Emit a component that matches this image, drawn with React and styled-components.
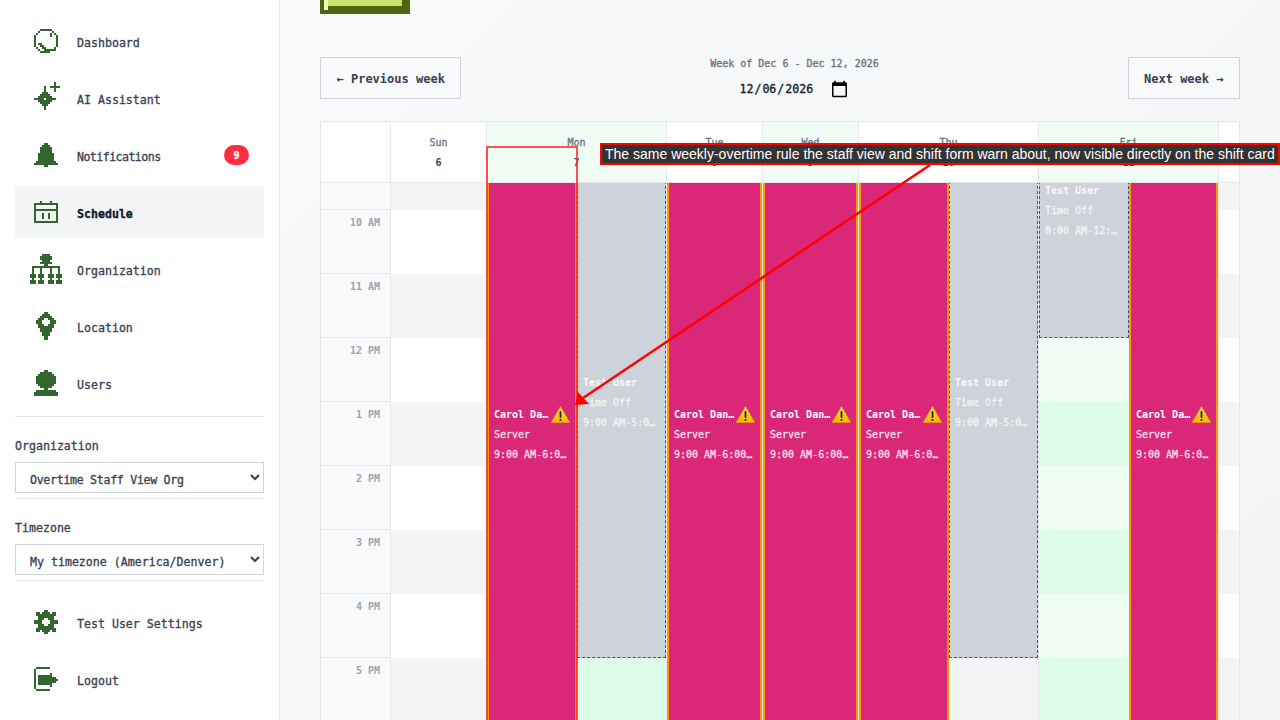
import React from "react";
import styled, { createGlobalStyle } from "styled-components";

const MONO = `"DejaVu Sans Mono", "Liberation Mono", monospace`;

const Global = createGlobalStyle`
  html, body { margin: 0; padding: 0; height: 100%; overflow: hidden; }
  body { font-family: ${MONO}; background: #f9fafb; -webkit-text-stroke: 0.3px currentColor; }
  * { box-sizing: border-box; }
`;

const Page = styled.div`
  position: relative;
  display: flex;
  width: 1280px;
  height: 720px;
  overflow: hidden;
`;

const Sidebar = styled.aside`
  flex: 0 0 280px;
  height: 720px;
  padding: 15px 15px 0;
  background: #fff;
  border-right: 1px solid #e5e7eb;
  box-shadow: 1px 0 2px rgba(0, 0, 0, 0.04);
  display: flex;
  flex-direction: column;
`;

const NavList = styled.nav`
  display: flex;
  flex-direction: column;
  gap: 5px;
`;

const NavItem = styled.a`
  display: flex;
  align-items: center;
  height: 52px;
  padding-left: 15px;
  padding-right: 15px;
  gap: 15px;
  background: ${(p) => (p.$active ? "#f3f4f6" : "transparent")};
  color: ${(p) => (p.$active ? "#111827" : "#374151")};
  font-size: 11.6px;
  font-weight: ${(p) => (p.$active ? 700 : 500)};
`;

const IconCell = styled.span`
  flex: 0 0 32px;
  display: flex;
  justify-content: center;
  align-items: center;
`;

const NavLabel = styled.span`
  flex: 1;
  padding-top: 4px;
  letter-spacing: ${(p) => p.$spacing || "0"};
`;

const Badge = styled.span`
  width: 25px;
  height: 20px;
  border-radius: 10px;
  background: #ff2d3d;
  color: #fff;
  font-size: 10px;
  font-weight: 700;
  display: flex;
  align-items: center;
  justify-content: center;
`;

const Divider = styled.hr`
  width: 100%;
  height: 1px;
  margin: ${(p) => p.$gap || "5px"} 0 0;
  border: 0;
  flex: 0 0 1px;
  background: #e5e7eb;
`;

const Section = styled.div`
  padding-top: 20px;
  display: flex;
  flex-direction: column;
`;

const SectionLabel = styled.label`
  height: 16px;
  line-height: 18px;
  margin-bottom: 9px;
  font-size: 11.6px;
  font-weight: 500;
  color: #374151;
`;

const Select = styled.select`
  width: 100%;
  height: 31px;
  padding: 5px 10px 0;
  border: 1px solid #d1d5db;
  border-radius: 0;
  background: #fff;
  color: #374151;
  font-family: ${MONO};
  font-size: 11.6px;
  font-weight: 500;
  letter-spacing: ${(p) => p.$spacing || "0"};
  -webkit-text-stroke: 0.3px #374151;
`;

const BottomNav = styled(NavList)`
  padding-top: 15px;
`;

const Main = styled.main`
  flex: 1;
  min-width: 0;
  height: 720px;
  padding: 0 40px;
  display: flex;
  flex-direction: column;
  background: linear-gradient(135deg, #f9fafb, #f3f4f6);
`;

const Logo = styled.svg`
  display: block;
  flex: 0 0 14px;
`;

const WeekBar = styled.div`
  margin-top: 43px;
  height: 42px;
  display: flex;
  justify-content: space-between;
  align-items: flex-start;
`;

const WeekButton = styled.button`
  height: 42px;
  padding: 1px 15.5px 0;
  border: 1px solid #d1d5db;
  border-radius: 0;
  background: #f9fafb;
  color: #374151;
  font-family: ${MONO};
  font-size: 12px;
  font-weight: 700;
  white-space: nowrap;
  -webkit-text-stroke: 0;
`;

const WeekCenter = styled.div`
  display: flex;
  flex-direction: column;
  align-items: center;
`;

const WeekLabel = styled.div`
  height: 14px;
  line-height: 14px;
  font-size: 10px;
  color: #6b7280;
`;

const DateInput = styled.input`
  width: 116px;
  height: 24px;
  margin-top: 6px;
  padding: 0 3px 0 2px;
  border: 0;
  background: transparent;
  color: #111827;
  font-family: ${MONO};
  font-size: 11.6px;
  outline: none;
  -webkit-text-stroke: 0.3px #111827;
  &::-webkit-datetime-edit { padding: 0; }
  &::-webkit-datetime-edit-fields-wrapper { padding: 0; }
  &::-webkit-calendar-picker-indicator {
    width: 19px;
    height: 19px;
    padding: 0;
    margin: 0;
  }
`;

const Calendar = styled.section`
  margin-top: 22px;
  flex: 1;
  min-height: 0;
  border: 1px solid #e5e7eb;
  border-bottom: 0;
  display: flex;
  flex-direction: column;
  overflow: hidden;
`;

const COLS = "70px 96px 180px 96px 96px 180px 180px 20px";

const HeadRow = styled.div`
  flex: 0 0 61px;
  display: grid;
  grid-template-columns: ${COLS};
  border-bottom: 1px solid #e5e7eb;
`;

const HeadCell = styled.div`
  display: flex;
  flex-direction: column;
  align-items: center;
  justify-content: center;
  border-right: 1px solid #e5e7eb;
  background: ${(p) => (p.$today ? "#f0fdf4" : "#fff")};
  &:last-child { border-right: 0; }
`;

const DayName = styled.span`
  height: 20px;
  line-height: 22px;
  font-size: 10px;
  font-weight: 500;
  color: #6b7280;
`;

const DayNum = styled.span`
  height: 20px;
  line-height: 22px;
  font-size: 10px;
  font-weight: 700;
  color: #374151;
  -webkit-text-stroke: 0;
`;

const Body = styled.div`
  flex: 1;
  min-height: 0;
  overflow: hidden;
`;

const BodyGrid = styled.div`
  margin-top: -37px;
  display: grid;
  grid-template-columns: ${COLS};
`;

const TimeColumn = styled.div`
  display: flex;
  flex-direction: column;
  border-right: 1px solid #e5e7eb;
  background: #f9fafb;
`;

const TimeCell = styled.div`
  height: 64px;
  padding: 7px 10px 0 0;
  border-bottom: 1px solid #e5e7eb;
  text-align: right;
  font-size: 10px;
  line-height: 12px;
  font-weight: 700;
  color: #9ca3af;
  -webkit-text-stroke: 0;
`;

const DayColumn = styled.div`
  position: relative;
  display: flex;
  flex-direction: column;
  border-right: 1px solid #e5e7eb;
  &:last-child { border-right: 0; }
`;

const HourCell = styled.div`
  height: 64px;
  background: ${(p) =>
    p.$today ? (p.$odd ? "#dcfce7" : "#f0fdf4") : p.$odd ? "#f3f4f6" : "#fff"};
`;

const Shift = styled.div`
  position: absolute;
  display: flex;
  flex-direction: column;
  justify-content: center;
  min-width: 0;
  overflow: hidden;
  ${(p) =>
    p.$off
      ? `background: #ced2da; border: 1px dashed #4b5563; padding: 0 5px; color: #f9fafb;`
      : `background: #db2777; border-left: 2px solid #ff9900; border-right: 2px solid #ff9900; padding: 0 5px 0 5px; color: #fff;`}
`;

const ShiftTitle = styled.div`
  display: flex;
  align-items: center;
  gap: 1px;
  height: 20px;
  font-size: 10px;
  font-weight: 700;
  -webkit-text-stroke: 0;
`;

const TruncatedName = styled.span`
  flex: 1;
  min-width: 0;
  overflow: hidden;
  white-space: nowrap;
  text-overflow: ellipsis;
`;

const ShiftLine = styled.div`
  height: 20px;
  line-height: 22px;
  font-size: 10px;
  opacity: 0.85;
  overflow: hidden;
  white-space: nowrap;
  text-overflow: ellipsis;
`;

const Highlight = styled.div`
  position: absolute;
  left: 486px;
  top: 146px;
  width: 92px;
  height: 590px;
  border: 2px solid rgba(255, 40, 40, 0.8);
  pointer-events: none;
`;

const Callout = styled.div`
  position: absolute;
  left: 600px;
  top: 143px;
  width: 680px;
  height: 22px;
  padding-left: 3px;
  background: #333;
  border: 2px solid #ff0000;
  color: #fff;
  font-family: "Liberation Sans", Arial, sans-serif;
  font-size: 14px;
  line-height: 18px;
  white-space: nowrap;
  -webkit-text-stroke: 0;
`;

const ArrowLayer = styled.svg`
  position: absolute;
  left: 0;
  top: 0;
  pointer-events: none;
`;

const icons = {
  dashboard: [
    "...######...",
    "..#......#..",
    ".#......#.#.",
    "#.......#..#",
    "#..........#",
    "#..........#",
    "#..........#",
    "#.##.......#",
    "#..##......#",
    ".#..##....#.",
    "..#..######.",
    "...#####....",
  ],
  sparkle: [
    "...........#..",
    "...........#..",
    "......#..#####",
    "......#....#..",
    "......#....#..",
    ".....###......",
    "....#####.....",
    "...#######....",
    ".#####.#####..",
    "...#######....",
    "....#####.....",
    ".....###......",
    "......#.......",
    "......#.......",
    "..............",
    "..............",
  ],
  bell: [
    ".....##.....",
    "....####....",
    "...######...",
    "...######...",
    "...######...",
    "..########..",
    "..########..",
    "..########..",
    "..########..",
    ".##########.",
    "############",
    ".....##.....",
  ],
  calendar: [
    "...#....#...",
    "############",
    "#..........#",
    "#..........#",
    "############",
    "#..........#",
    "#...#..#...#",
    "#...#..#...#",
    "#...#..#...#",
    "#..........#",
    "############",
  ],
  org: [
    "......####......",
    ".....######.....",
    ".....######.....",
    "......####......",
    ".....######.....",
    ".......##.......",
    ".##############.",
    ".#...#....#...#.",
    ".#...#....#...#.",
    ".#...#....#...#.",
    "###.###..###.###",
    "###.###..###.###",
    ".#...#....#...#.",
    "###.###..###.###",
    "###.###..###.###",
  ],
  pin: [
    "....##....",
    "...####...",
    "..######..",
    ".###..###.",
    "###....###",
    "###....###",
    ".###..###.",
    ".########.",
    "..######..",
    "..######..",
    "...####...",
    "...####...",
    "....##....",
    "....##....",
  ],
  user: [
    ".....##.....",
    "...######...",
    "..########..",
    ".##########.",
    ".##########.",
    ".##########.",
    ".##########.",
    "..########..",
    "...######...",
    ".....##.....",
    ".##########.",
    "############",
    "############",
  ],
  gear: [
    ".....##.....",
    ".##.####.##.",
    ".##########.",
    "..########..",
    "..###..###..",
    "####....####",
    "####....####",
    "..###..###..",
    "..########..",
    ".##########.",
    ".##.####.##.",
    ".....##.....",
  ],
  logout: [
    ".#######....",
    "#...........",
    "#...........",
    "#.......#...",
    "#.#######...",
    "#.#########.",
    "#.##########",
    "#.#########.",
    "#.#######...",
    "#.......#...",
    "#...........",
    ".#######....",
  ],
};

function PixelIcon({ name }) {
  const rows = icons[name];
  const w = rows[0].length;
  const h = rows.length;
  let d = "";
  rows.forEach((row, y) => {
    [...row].forEach((c, x) => {
      if (c === "#") d += `M${x} ${y}h1v1h-1z`;
    });
  });
  return (
    <svg width={w * 2} height={h * 2} viewBox={`0 0 ${w} ${h}`} shapeRendering="crispEdges" aria-hidden="true">
      <path d={d} fill="#33662f" />
    </svg>
  );
}

function WarnIcon() {
  return (
    <svg width="19" height="17" viewBox="0 0 19 17" style={{ flex: "0 0 19px" }} aria-hidden="true">
      <defs>
        <linearGradient id="warnFill" x1="0" y1="0" x2="0" y2="1">
          <stop offset="0" stopColor="#ffe14d" />
          <stop offset="1" stopColor="#f7b500" />
        </linearGradient>
      </defs>
      <path d="M9.5 0.5 L18.8 16.5 H0.2 Z" fill="url(#warnFill)" stroke="#e9a800" strokeWidth="0.6" strokeLinejoin="round" />
      <rect x="8.6" y="5" width="1.8" height="7" rx="0.9" fill="#222" />
      <circle cx="9.5" cy="14" r="1.1" fill="#222" />
    </svg>
  );
}

const NAV = [
  { icon: "dashboard", label: "Dashboard" },
  { icon: "sparkle", label: "AI Assistant" },
  { icon: "bell", label: "Notifications", badge: "9", spacing: "-0.55px" },
  { icon: "calendar", label: "Schedule", active: true },
  { icon: "org", label: "Organization" },
  { icon: "pin", label: "Location" },
  { icon: "user", label: "Users" },
];

const HOURS = ["9 AM", "10 AM", "11 AM", "12 PM", "1 PM", "2 PM", "3 PM", "4 PM", "5 PM"];

const carol = { name: "Carol Danvers", role: "Server", time: "9:00 AM-6:00 PM", top: 0, height: 576 };

const DAYS = [
  { name: "Sun", num: 6 },
  {
    name: "Mon", num: 7, today: true,
    shifts: [
      { ...carol, left: 0, width: 90 },
      { name: "Test User", role: "Time Off", time: "9:00 AM-5:00 PM", off: true, top: 0, height: 512, left: 90, width: 89 },
    ],
  },
  { name: "Tue", num: 8, shifts: [{ ...carol, left: 0, width: 95 }] },
  { name: "Wed", num: 9, today: true, shifts: [{ ...carol, left: 0, width: 95 }] },
  {
    name: "Thu", num: 10,
    shifts: [
      { ...carol, left: 0, width: 90 },
      { name: "Test User", role: "Time Off", time: "9:00 AM-5:00 PM", off: true, top: 0, height: 512, left: 90, width: 89 },
    ],
  },
  {
    name: "Fri", num: 11, today: true,
    shifts: [
      { name: "Test User", role: "Time Off", time: "8:00 AM-12:00 PM", off: true, top: -64, height: 256, left: 0, width: 90 },
      { ...carol, left: 90, width: 89 },
    ],
  },
  { name: "", num: "", key: "sat" },
];

export default function App() {
  return (
    <>
      <Global />
      <Page>
        <Sidebar>
          <NavList>
            {NAV.map((n) => (
              <NavItem key={n.label} $active={n.active}>
                <IconCell><PixelIcon name={n.icon} /></IconCell>
                <NavLabel $spacing={n.spacing}>{n.label}</NavLabel>
                {n.badge && <Badge>{n.badge}</Badge>}
              </NavItem>
            ))}
          </NavList>
          <Divider $gap="7px" />
          <Section>
            <SectionLabel>Organization</SectionLabel>
            <Select defaultValue="o" $spacing="-0.3px"><option value="o">Overtime Staff View Org</option></Select>
          </Section>
          <Divider />
          <Section>
            <SectionLabel>Timezone</SectionLabel>
            <Select defaultValue="t"><option value="t">My timezone (America/Denver)</option></Select>
          </Section>
          <Divider />
          <BottomNav>
            <NavItem>
              <IconCell><PixelIcon name="gear" /></IconCell>
              <NavLabel>Test User Settings</NavLabel>
            </NavItem>
            <NavItem>
              <IconCell><PixelIcon name="logout" /></IconCell>
              <NavLabel>Logout</NavLabel>
            </NavItem>
          </BottomNav>
        </Sidebar>
        <Main>
          <Logo width="90" height="14" viewBox="0 0 90 14" shapeRendering="crispEdges" aria-hidden="true">
            <rect width="90" height="14" fill="#4d6410" />
            <rect x="8" width="74" height="6" fill="#cbe06b" />
            <rect x="4" width="4" height="10" fill="#eef6bd" />
          </Logo>
          <WeekBar>
            <WeekButton>← Previous week</WeekButton>
            <WeekCenter>
              <WeekLabel>Week of Dec 6 - Dec 12, 2026</WeekLabel>
              <DateInput type="date" defaultValue="2026-12-06" />
            </WeekCenter>
            <WeekButton>Next week →</WeekButton>
          </WeekBar>
          <Calendar>
            <HeadRow>
              <HeadCell />
              {DAYS.map((d) => (
                <HeadCell key={d.key || d.name} $today={d.today}>
                  <DayName>{d.name}</DayName>
                  <DayNum>{d.num}</DayNum>
                </HeadCell>
              ))}
            </HeadRow>
            <Body>
              <BodyGrid>
                <TimeColumn>
                  {HOURS.map((h) => <TimeCell key={h}>{h}</TimeCell>)}
                </TimeColumn>
                {DAYS.map((d) => (
                  <DayColumn key={d.key || d.name}>
                    {HOURS.map((h, i) => (
                      <HourCell key={h} $today={d.today} $odd={i % 2 === 0} />
                    ))}
                    {(d.shifts || []).map((s) => (
                      <Shift
                        key={s.name}
                        $off={s.off}
                        style={{ left: s.left, width: s.width, top: s.top, height: s.height }}
                      >
                        <ShiftTitle>
                          <TruncatedName>{s.name}</TruncatedName>
                          {!s.off && <WarnIcon />}
                        </ShiftTitle>
                        <ShiftLine>{s.role}</ShiftLine>
                        <ShiftLine>{s.time}</ShiftLine>
                      </Shift>
                    ))}
                  </DayColumn>
                ))}
              </BodyGrid>
            </Body>
          </Calendar>
        </Main>
        <Highlight />
        <ArrowLayer width="1280" height="720" viewBox="0 0 1280 720" aria-hidden="true">
          <line x1="930" y1="165" x2="583" y2="398" stroke="#ff0000" strokeWidth="2.5" />
          <path d="M575 405 L578 392 L589 404 Z" fill="#ff0000" />
        </ArrowLayer>
        <Callout>The same weekly-overtime rule the staff view and shift form warn about, now visible directly on the shift card</Callout>
      </Page>
    </>
  );
}
